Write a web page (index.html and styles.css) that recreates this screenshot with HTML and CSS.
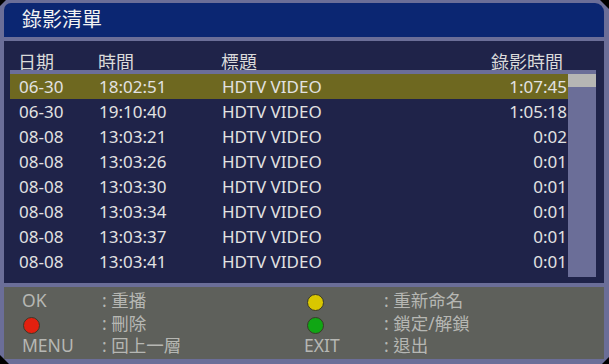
FILE: index.html
```html
<!DOCTYPE html>
<html lang="zh-Hant">
<head>
<meta charset="utf-8">
<title>錄影清單</title>
<link rel="stylesheet" href="styles.css">
</head>
<body>
<div class="frame">
  <div class="title">錄影清單</div>
  <div class="list">
    <div class="head cols">
      <span>日期</span><span>時間</span><span>標題</span><span class="dur">錄影時間</span>
    </div>
    <div class="box">
      <div class="rows">
        <div class="row cols sel"><span>06-30</span><span>18:02:51</span><span>HDTV VIDEO</span><span class="dur">1:07:45</span></div>
        <div class="row cols"><span>06-30</span><span>19:10:40</span><span>HDTV VIDEO</span><span class="dur">1:05:18</span></div>
        <div class="row cols"><span>08-08</span><span>13:03:21</span><span>HDTV VIDEO</span><span class="dur">0:02</span></div>
        <div class="row cols"><span>08-08</span><span>13:03:26</span><span>HDTV VIDEO</span><span class="dur">0:01</span></div>
        <div class="row cols"><span>08-08</span><span>13:03:30</span><span>HDTV VIDEO</span><span class="dur">0:01</span></div>
        <div class="row cols"><span>08-08</span><span>13:03:34</span><span>HDTV VIDEO</span><span class="dur">0:01</span></div>
        <div class="row cols"><span>08-08</span><span>13:03:37</span><span>HDTV VIDEO</span><span class="dur">0:01</span></div>
        <div class="row cols"><span>08-08</span><span>13:03:41</span><span>HDTV VIDEO</span><span class="dur">0:01</span></div>
      </div>
      <div class="scroll"><div class="thumb"></div></div>
    </div>
  </div>
  <div class="help">
    <span class="key">OK</span><span class="act">: 重播</span>
    <span class="key"><i class="dot yellow"></i></span><span class="act">: 重新命名</span>
    <span class="key"><i class="dot red"></i></span><span class="act">: 刪除</span>
    <span class="key"><i class="dot green"></i></span><span class="act">: 鎖定/解鎖</span>
    <span class="key">MENU</span><span class="act">: 回上一層</span>
    <span class="key">EXIT</span><span class="act">: 退出</span>
  </div>
</div>
</body>
</html>
```
FILE: styles.css
```css
html, body {
  margin: 0;
  padding: 0;
  background: #000;
}
body {
  font-family: "Noto Sans", "Noto Sans CJK TC", sans-serif;
}
.frame {
  width: 609px;
  height: 364px;
  box-sizing: border-box;
  background: #6b6e98;
  padding: 3px 5px 5px 4px;
  display: flex;
  flex-direction: column;
  gap: 4px;
  clip-path: polygon(6px 0, calc(100% - 9px) 0, 100% 9px, 100% calc(100% - 7px), calc(100% - 7px) 100%, 9px 100%, 0 calc(100% - 9px), 0 6px);
}
.title {
  height: 34px;
  flex: none;
  background: #0b2672;
  color: #f2f2f2;
  font-size: 20px;
  line-height: 34px;
  padding-left: 18px;
  border-radius: 7px 9px 0 0;
}
.list {
  flex: 1;
  background: #1f2349;
  display: flex;
  flex-direction: column;
  padding: 0 8px 0 6px;
}
.cols {
  display: grid;
  grid-template-columns: 80px 123px 1fr auto;
  padding-left: 9px;
  padding-right: 1px;
}
.head {
  color: #dadada;
  font-size: 18px;
  height: 29px;
  flex: none;
  box-sizing: border-box;
  padding-top: 10px;
  line-height: 22px;
  padding-right: 33px;
  padding-left: 8px;
}
.dur {
  text-align: right;
}
.box {
  display: flex;
  border-top: 4px solid #6b6e98;
}
.rows {
  flex: 1;
}
.row {
  height: 25px;
  line-height: 25px;
  font-size: 17px;
  color: #e2e2e2;
}
.row.sel {
  background: #6e6820;
}
.scroll {
  width: 28px;
  background: #6b6e98;
  margin-bottom: -3px;
}
.thumb {
  height: 13px;
  background: #b6b6b4;
}
.help {
  height: 72px;
  flex: none;
  box-sizing: border-box;
  background: #5e605b;
  color: #b6b7b3;
  font-size: 17.5px;
  display: grid;
  grid-template-columns: 80px 202px 80px 1fr;
  grid-auto-rows: 22.5px;
  align-items: center;
  padding: 2px 0 0 18px;
}
.key, .act {
  line-height: 22px;
}
.dot {
  display: block;
  box-sizing: border-box;
  width: 17px;
  height: 17px;
  border-radius: 50%;
  border: 1px solid #3a3a2a;
  margin-top: 5px;
}
.red { background: #e3200f; margin-left: 1px; }
.yellow { background: #d9c700; margin-left: 3px; }
.green { background: #10a614; margin-left: 3px; }
```
